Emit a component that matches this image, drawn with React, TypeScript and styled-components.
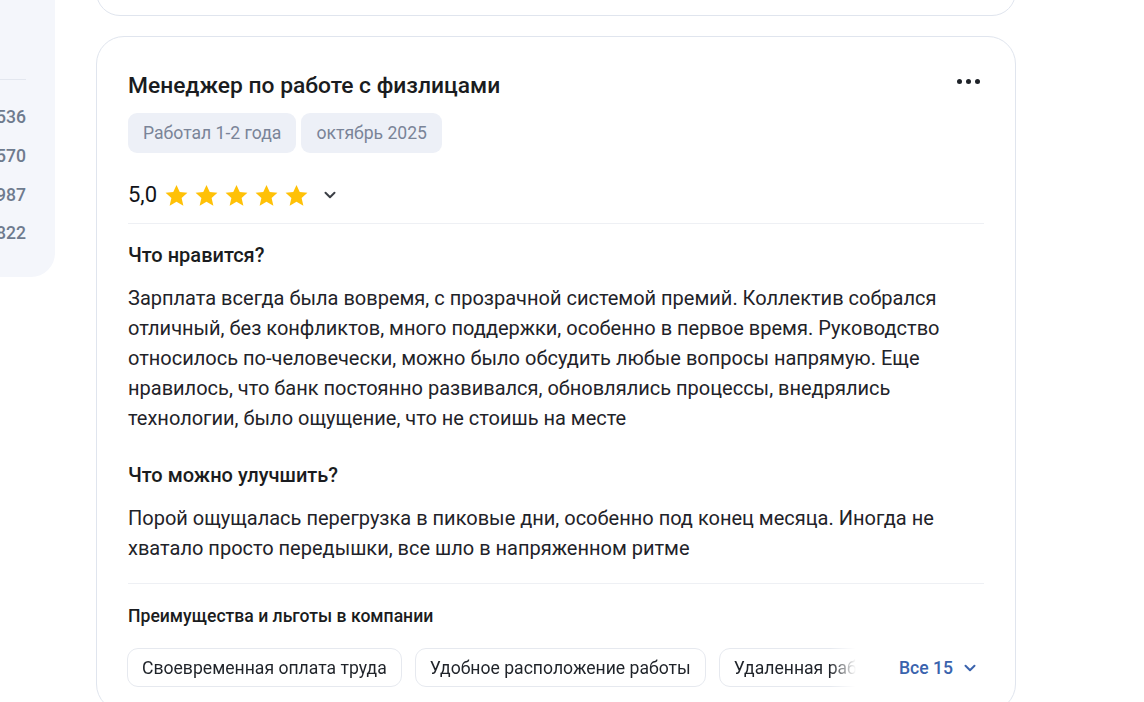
import React from "react";
import styled, { createGlobalStyle } from "styled-components";

const GlobalStyle = createGlobalStyle`
  *, *::before, *::after {
    box-sizing: border-box;
  }
  html, body {
    margin: 0;
    padding: 0;
    background: #ffffff;
    font-family: Roboto, "Noto Sans", "Liberation Sans", sans-serif;
    color: #1f2329;
    overflow: hidden;
  }
`;

const stats = ["1 536", "2 570", "4 987", "1 822"];

const likes =
  "Зарплата всегда была вовремя, с прозрачной системой премий. Коллектив собрался отличный, без конфликтов, много поддержки, особенно в первое время. Руководство относилось по-человечески, можно было обсудить любые вопросы напрямую. Еще нравилось, что банк постоянно развивался, обновлялись процессы, внедрялись технологии, было ощущение, что не стоишь на месте";

const improve =
  "Порой ощущалась перегрузка в пиковые дни, особенно под конец месяца. Иногда не хватало просто передышки, все шло в напряженном ритме";

const benefits = [
  "Своевременная оплата труда",
  "Удобное расположение работы",
  "Удаленная работа",
  "ДМС",
];

const Star = () => (
  <svg width="25" height="25" viewBox="0 0 24 24">
    <path
      fill="#FFC107"
      d="M12 1.8l3.1 6.9 7.4.7-5.6 5 1.7 7.4L12 17.9l-6.6 3.9 1.7-7.4-5.6-5 7.4-.7z"
    />
  </svg>
);

const Chevron = ({ color }: { color: string }) => (
  <svg width="14" height="14" viewBox="0 0 14 14">
    <path
      d="M2.5 4.8L7 9.2l4.5-4.4"
      fill="none"
      stroke={color}
      strokeWidth="2"
      strokeLinecap="round"
      strokeLinejoin="round"
    />
  </svg>
);

const App: React.FC = () => {
  return (
    <>
      <GlobalStyle />
      <Page>
        <Sidebar>
          <SidebarHead />
          <Divider />
          <StatList>
            {stats.map((s) => (
              <StatRow key={s}>{s}</StatRow>
            ))}
          </StatList>
        </Sidebar>
        <Feed>
          <PrevCard />
          <Card>
            <TitleRow>
              <Title>Менеджер по работе с физлицами</Title>
              <MoreButton aria-label="Ещё">
                <Dot />
                <Dot />
                <Dot />
              </MoreButton>
            </TitleRow>
            <Tags>
              <Tag>Работал 1-2 года</Tag>
              <Tag>октябрь 2025</Tag>
            </Tags>
            <RatingRow>
              <Score>5,0</Score>
              <Stars>
                {[0, 1, 2, 3, 4].map((i) => (
                  <Star key={i} />
                ))}
              </Stars>
              <ExpandButton>
                <Chevron color="#3b3f46" />
              </ExpandButton>
            </RatingRow>
            <Section>
              <SectionTitle>Что нравится?</SectionTitle>
              <Text>{likes}</Text>
            </Section>
            <Section $spaced>
              <SectionTitle>Что можно улучшить?</SectionTitle>
              <Text>{improve}</Text>
            </Section>
            <Benefits>
              <BenefitsTitle>Преимущества и льготы в компании</BenefitsTitle>
              <BenefitsRow>
                <BenefitScroller>
                  {benefits.map((b) => (
                    <Benefit key={b}>{b}</Benefit>
                  ))}
                </BenefitScroller>
                <AllLink>
                  Все 15
                  <Chevron color="#3a63ad" />
                </AllLink>
              </BenefitsRow>
            </Benefits>
          </Card>
        </Feed>
      </Page>
    </>
  );
};

const Page = styled.div`
  display: flex;
  align-items: flex-start;
  gap: 41px;
  margin-top: -86px;
`;

const Sidebar = styled.aside`
  flex: 0 0 300px;
  margin-left: -245px;
  background: #f4f6fb;
  border-radius: 0 0 24px 0;
  padding: 0 29px 24px 24px;
`;

const SidebarHead = styled.div`
  height: 165px;
`;

const Divider = styled.div`
  height: 1px;
  background: #e3e7ef;
`;

const StatList = styled.div`
  display: flex;
  flex-direction: column;
  padding-top: 18px;
`;

const StatRow = styled.div`
  display: flex;
  justify-content: flex-end;
  align-items: center;
  height: 38.7px;
  font-size: 17.6px;
  font-weight: 500;
  color: #6f7b8e;
  white-space: nowrap;
`;

const Feed = styled.div`
  flex: 0 0 920px;
  width: 920px;
  min-width: 0;
  display: flex;
  flex-direction: column;
  gap: 20px;
`;

const PrevCard = styled.div`
  height: 102px;
  border: 1px solid #e0e5ee;
  border-radius: 24px;
  background: #fff;
`;

const Card = styled.article`
  min-width: 0;
  border: 1px solid #e0e5ee;
  border-radius: 28px;
  background: #fff;
  padding: 33px 31px 24px 31px;
`;

const TitleRow = styled.div`
  display: flex;
  justify-content: space-between;
  align-items: center;
`;

const Title = styled.h2`
  margin: 0;
  font-size: 22.8px;
  line-height: 31px;
  font-weight: 500;
  color: #1a1c20;
`;

const MoreButton = styled.button`
  display: flex;
  gap: 4px;
  align-items: center;
  border: none;
  background: none;
  padding: 0 4px;
  margin-top: -8px;
  cursor: pointer;
`;

const Dot = styled.span`
  width: 5px;
  height: 5px;
  border-radius: 50%;
  background: #1f2329;
`;

const Tags = styled.div`
  display: flex;
  gap: 5px;
  margin-top: 12px;
`;

const Tag = styled.span`
  display: inline-flex;
  align-items: center;
  height: 40px;
  padding: 0 15px;
  border-radius: 9px;
  background: #edf0f7;
  color: #7a8498;
  font-size: 17.6px;
`;

const RatingRow = styled.div`
  display: flex;
  align-items: center;
  margin-top: 27px;
  padding-bottom: 13px;
  border-bottom: 1px solid #eef0f4;
`;

const Score = styled.span`
  font-size: 22px;
  line-height: 30px;
  color: #111318;
  margin-right: 7px;
`;

const Stars = styled.div`
  display: flex;
  gap: 5px;
`;

const ExpandButton = styled.button`
  display: flex;
  align-items: center;
  border: none;
  background: none;
  margin-left: 10px;
  padding: 0 4px;
  cursor: pointer;
`;

const Section = styled.section<{ $spaced?: boolean }>`
  margin-top: ${(p) => (p.$spaced ? "29px" : "18px")};
`;

const SectionTitle = styled.h3`
  margin: 0;
  font-size: 20px;
  line-height: 26px;
  font-weight: 500;
  color: #1a1c20;
`;

const Text = styled.p`
  margin: 15px 0 0;
  font-size: 20px;
  line-height: 30px;
  color: #1f2329;
`;

const Benefits = styled.div`
  margin-top: 20px;
  padding-top: 20px;
  border-top: 1px solid #eef0f4;
`;

const BenefitsTitle = styled.h4`
  margin: 0;
  font-size: 17.6px;
  line-height: 24px;
  font-weight: 500;
  color: #1a1c20;
`;

const BenefitsRow = styled.div`
  display: flex;
  align-items: center;
  margin-top: 20px;
`;

const BenefitScroller = styled.div`
  flex: 1 1 0;
  min-width: 0;
  display: flex;
  gap: 13px;
  overflow: hidden;
  margin-left: -1px;
  -webkit-mask-image: linear-gradient(to right, #000 calc(100% - 26px), transparent 100%);
  mask-image: linear-gradient(to right, #000 calc(100% - 26px), transparent 100%);
`;

const Benefit = styled.span`
  flex: 0 0 auto;
  display: inline-flex;
  align-items: center;
  height: 39px;
  padding: 0 14px;
  border: 1px solid #e6e9ef;
  border-radius: 11px;
  background: #fff;
  font-size: 17.6px;
  color: #1f2329;
  white-space: nowrap;
`;

const AllLink = styled.button`
  flex: 0 0 auto;
  display: inline-flex;
  align-items: center;
  gap: 10px;
  border: none;
  background: none;
  padding: 0 7px 0 43px;
  font-family: inherit;
  font-size: 17.6px;
  font-weight: 500;
  color: #3a63ad;
  cursor: pointer;
`;

export default App;
